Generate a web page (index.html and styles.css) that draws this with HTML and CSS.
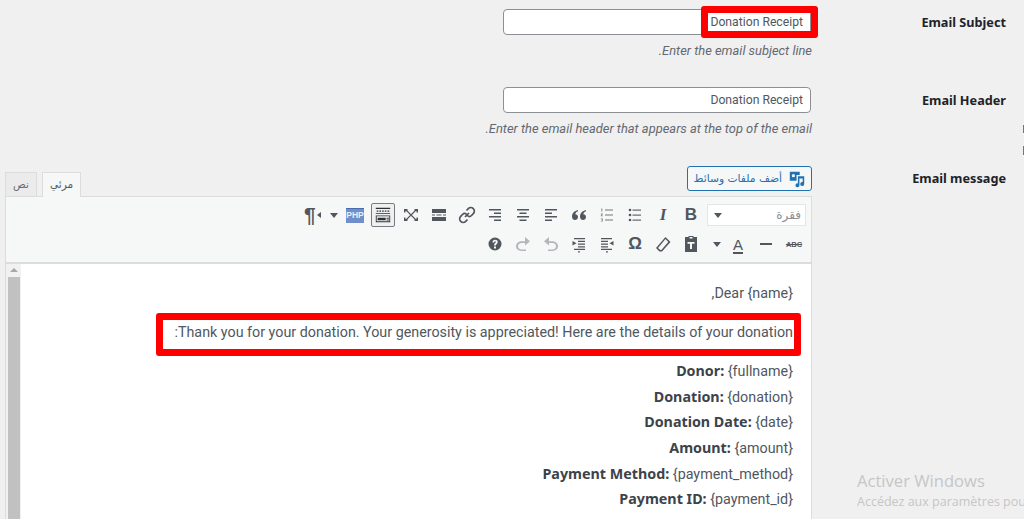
FILE: index.html
```html
<!DOCTYPE html>
<html lang="ar" dir="rtl">
<head>
<meta charset="utf-8">
<title>Email settings</title>
<link rel="stylesheet" href="styles.css">
</head>
<body>
<svg class="defs" width="0" height="0" aria-hidden="true">
  <symbol id="i-fullscreen" viewBox="0 0 20 20"><path d="M3 4h3.500v1.500L6 6H4.500v1.500H3zM13.500 4H17v3.500h-1.500V6H14l-.5-.5zM3 12.500h1.500V14H6l.5.5V16H3zM15.500 12.500H17V16h-3.500v-1.500L14 14h1.500z"/><path fill="none" stroke="currentColor" stroke-width="1.100" d="M5.500 5.500l9 9M14.500 5.500l-9 9"/></symbol>
  <symbol id="i-more" viewBox="0 0 20 20"><path d="M3 4h14v4H3zM3 12h14v4H3zM3 9.400h3v1.200H3zM7.500 9.400h5v1.200h-5zM14 9.400h3v1.200h-3z"/></symbol>
  <symbol id="i-link" viewBox="0 0 20 20"><path fill="none" stroke="currentColor" stroke-width="1.700" d="M8 12l4-4M9.500 5.500l1.800-1.800a3 3 0 0 1 5 5L14.500 10.500a3 3 0 0 1-4.200 0M10.500 14.500l-1.800 1.800a3 3 0 0 1-5-5L5.500 9.500a3 3 0 0 1 4.200 0"/></symbol>
  <symbol id="i-right" viewBox="0 0 20 20"><path d="M4 4h12v1.500H4zM9 7.500h7V9H9zM4 11h12v1.500H4zM9 14.500h7V16H9z"/></symbol>
  <symbol id="i-center" viewBox="0 0 20 20"><path d="M4 4h12v1.500H4zM6.500 7.500h7V9h-7zM4 11h12v1.500H4zM6.500 14.500h7V16h-7z"/></symbol>
  <symbol id="i-left" viewBox="0 0 20 20"><path d="M4 4h12v1.500H4zM4 7.500h7V9H4zM4 11h12v1.500H4zM4 14.500h7V16H4z"/></symbol>
  <symbol id="i-quote" viewBox="0 0 20 20"><path d="M9 5C5.500 6 3 8 3 11.500 3 14 4.500 15 6 15s3-1.200 3-3-1.300-2.800-2.700-2.800C6.500 7.800 7.600 6.800 9 6.300zM17 5c-3.500 1-6 3-6 6.500 0 2.500 1.500 3.500 3 3.500s3-1.200 3-3-1.300-2.800-2.700-2.800c.2-1.400 1.300-2.400 2.700-2.900z"/></symbol>
  <symbol id="i-ol" viewBox="0 0 20 20"><path d="M8 4.500h8v1.100H8zM8 9.500h8v1.100H8zM8 14.500h8v1.100H8z" opacity=".8"/><path d="M4.300 3.500h1v3h-1zM3.800 8.500h2v.8L4.800 10.500h1v.7H3.800v-.8l1-1.200h-1zM3.800 13.500h2v3h-2v-.6h1.200v-.6h-.9v-.5h.9v-.6H3.800z" opacity=".7"/></symbol>
  <symbol id="i-ul" viewBox="0 0 20 20"><path d="M7.500 4.500H16v1.200H7.500zM7.500 9.500H16v1.200H7.500zM7.500 14.500H16v1.200H7.500z" opacity=".85"/><circle cx="5" cy="5" r="1.300"/><circle cx="5" cy="10" r="1.300"/><circle cx="5" cy="15" r="1.300"/></symbol>
  <symbol id="i-kitchen" viewBox="0 0 20 20"><path d="M2 2h16v1.300H2zM2 8h16v.9H2zM3 5h1.800v1.500H3zM6 5h1.800v1.500H6zM9 5h1.800v1.500H9zM12 5h1.800v1.500H12zM15 5h2v1.500h-2z"/><path d="M2 10.500h16v1H2zM2 17h16v1H2zM2 10.500h1v7.500H2zM17 10.500h1v7.500h-1zM4 13h9v2.800H4zM14 13h2.500v1.200H14zM14 15h2.500v1H14z"/></symbol>
  <symbol id="i-help" viewBox="0 0 20 20"><path fill-rule="evenodd" d="M10 3.500a6.500 6.500 0 1 1 0 13 6.500 6.500 0 0 1 0-13zM9 12.500v2h2v-2zM7.500 8.500h1.800c0-.8.300-1.200.8-1.200s.8.300.8.800c0 .9-1.900 1.200-1.900 3.400h1.800c0-1.500 2-1.900 2-3.600C12.800 6.700 11.700 5.800 10 5.800 8.400 5.800 7.500 6.800 7.500 8.500z"/></symbol>
  <symbol id="i-redo" viewBox="0 0 20 20"><path d="M12 3l5 4.200-5 4.300V9H8.500C6.500 9 5 10.500 5 12.300S6.500 15.500 8.500 15.500H13V17H8.500C5.500 17 3 15 3 12.300S5.500 7.300 8.500 7.300H12z"/></symbol>
  <symbol id="i-undo" viewBox="0 0 20 20"><path d="M8 3L3 7.200l5 4.300V9h3.500c2 0 3.500 1.500 3.500 3.300s-1.500 3.200-3.500 3.200H7V17h4.500c3 0 5.500-2 5.500-4.700s-2.500-5-5.500-5H8z"/></symbol>
  <symbol id="i-indent" viewBox="0 0 20 20"><path d="M5 4h11v1.300H5zM9 6.800h7V8H9zM9 9.500h7v1.200H9zM9 12.200h7v1.200H9zM5 14.800h11v1.300H5zM7.500 9.300L3.500 7v4.600z"/><circle cx="10" cy="17.800" r=".9"/></symbol>
  <symbol id="i-outdent" viewBox="0 0 20 20"><path d="M4 4h11v1.300H4zM4 6.800h7V8H4zM4 9.500h7v1.200H4zM4 12.200h7v1.200H4zM4 14.800h11v1.300H4zM12.500 9.300l4-2.300v4.600z"/><circle cx="10" cy="17.800" r=".9"/></symbol>
  <symbol id="i-eraser" viewBox="0 0 20 20"><path fill-rule="evenodd" d="M12.500 3l5 5-8.500 9.500H6.500L3 14zM12.500 5L5 14l2.300 2h1L15.300 8z"/></symbol>
  <symbol id="i-paste" viewBox="0 0 20 20"><path fill-rule="evenodd" d="M7.500 3V2h5v1h3.500v15H4V3zM8.500 3v1.500h3V3zM6.500 8v1.800h2.500V15h2V9.800h2.500V8z"/></symbol>
  <symbol id="i-media" viewBox="0 0 20 20"><path fill-rule="evenodd" d="M2 2h11v3.500H9.500V12H2zM6 4.500a1.800 1.800 0 1 0 0 3.600 1.800 1.800 0 0 0 0-3.600z"/><path d="M11 7h7v8.500a2.200 2.200 0 1 1-1.700-2.100V9.500h-3.600v7.500a2.200 2.200 0 1 1-1.700-2.100z"/></symbol>
</svg>

<main class="form">
  <section class="row">
    <div class="label">Email Subject</div>
    <div class="field">
      <div class="input-wrap">
        <div class="input">Donation Receipt</div>
        <div class="mark mark-subject"></div>
      </div>
      <p class="hint">Enter the email subject line.</p>
    </div>
  </section>

  <section class="row">
    <div class="label">Email Header</div>
    <div class="field">
      <div class="input-wrap">
        <div class="input">Donation Receipt</div>
      </div>
      <p class="hint">Enter the email header that appears at the top of the email.</p>
    </div>
  </section>

  <section class="row row-editor">
    <div class="label label-editor">Email message</div>
    <div class="field">
      <div class="editor-head">
        <button class="media-btn"><svg class="media-icon"><use href="#i-media"/></svg>أضف ملفات وسائط</button>
        <div class="tabs">
          <span class="tab tab-active">مرئي</span>
          <span class="tab">نص</span>
        </div>
      </div>
      <div class="editor">
        <div class="toolbar">
          <div class="tb-row">
            <div class="format">فقرة<span class="caret"></span></div>
            <span class="tb tb-txt tb-b">B</span>
            <span class="tb tb-txt tb-i">I</span>
            <span class="tb"><svg><use href="#i-ul"/></svg></span>
            <span class="tb"><svg><use href="#i-ol"/></svg></span>
            <span class="tb"><svg><use href="#i-quote"/></svg></span>
            <span class="tb"><svg><use href="#i-left"/></svg></span>
            <span class="tb"><svg><use href="#i-center"/></svg></span>
            <span class="tb"><svg><use href="#i-right"/></svg></span>
            <span class="tb"><svg><use href="#i-link"/></svg></span>
            <span class="tb"><svg><use href="#i-more"/></svg></span>
            <span class="tb"><svg><use href="#i-fullscreen"/></svg></span>
            <span class="tb tb-active"><svg><use href="#i-kitchen"/></svg></span>
            <span class="tb"><span class="php">PHP</span></span>
            <span class="tb-arrow"><span class="caret"></span></span>
            <span class="tb tb-txt tb-para"><span class="para-arrow"></span>¶</span>
          </div>
          <div class="tb-row tb-row-2">
            <span class="tb tb-txt tb-abc">ABC</span>
            <span class="tb tb-txt tb-hr"></span>
            <span class="tb tb-txt tb-color">A</span>
            <span class="tb-arrow tb-arrow-wide"><span class="caret"></span></span>
            <span class="tb"><svg><use href="#i-paste"/></svg></span>
            <span class="tb"><svg><use href="#i-eraser"/></svg></span>
            <span class="tb tb-txt tb-omega">Ω</span>
            <span class="tb"><svg><use href="#i-outdent"/></svg></span>
            <span class="tb"><svg><use href="#i-indent"/></svg></span>
            <span class="tb tb-dim"><svg><use href="#i-undo"/></svg></span>
            <span class="tb tb-dim"><svg><use href="#i-redo"/></svg></span>
            <span class="tb"><svg><use href="#i-help"/></svg></span>
          </div>
        </div>
        <div class="content">
          <div class="text">
            <p>Dear {name},</p>
            <div class="para-mark">
              <p>Thank you for your donation. Your generosity is appreciated! Here are the details of your donation:</p>
              <div class="mark mark-para"></div>
            </div>
            <ul class="details">
              <li><strong>Donor:</strong> {fullname}</li>
              <li><strong>Donation:</strong> {donation}</li>
              <li><strong>Donation Date:</strong> {date}</li>
              <li><strong>Amount:</strong> {amount}</li>
              <li><strong>Payment Method:</strong> {payment_method}</li>
              <li><strong>Payment ID:</strong> {payment_id}</li>
            </ul>
          </div>
          <div class="scrollbar"><span class="sb-up"></span><span class="sb-thumb"></span></div>
        </div>
      </div>
    </div>
  </section>
</main>

<aside class="watermark" dir="ltr">
  <div class="wm-title">Activer Windows</div>
  <div class="wm-sub">Accédez aux paramètres pour activer Windows.</div>
</aside>
<span class="edge-tick edge-tick-a"></span>
<span class="edge-tick edge-tick-b"></span>
</body>
</html>
```

FILE: styles.css
```css
* { box-sizing: border-box; }
html, body { margin: 0; height: 519px; overflow: hidden; }
body {
  background: #f0f0f1;
  color: #3c434a;
  font-family: Roboto, "DejaVu Sans", sans-serif;
  font-size: 13px;
  position: relative;
}
.defs { position: absolute; }
.form { padding-top: 9px; }
.row { display: flex; align-items: flex-start; margin-bottom: 27px; }
.row-editor { margin-top: 28px; margin-bottom: 0; }
.label {
  width: 212px;
  flex: none;
  padding: 4px 18px 0 0;
  font-family: "Noto Sans", sans-serif;
  font-weight: 700;
  font-size: 12.7px;
  line-height: 18px;
  color: #1d2327;
}
.label-editor { padding-top: 3px; }
.field { width: 807px; flex: none; }
.input-wrap { position: relative; width: 308px; margin-right: 1px; }
.input {
  height: 26px;
  background: #fff;
  border: 1px solid #8c8f94;
  border-radius: 4px;
  padding: 0 7px;
  font-size: 12.2px;
  line-height: 25px;
  color: #50575e;
}
.hint {
  margin: 7px 0 0;
  font-style: italic;
  font-size: 12.9px;
  line-height: 18px;
  color: #646970;
}
.mark { position: absolute; border: 7px solid #f00; border-radius: 3px; }
.mark-subject { top: -3px; right: -7px; width: 117px; height: 32px; }

.editor-head { display: flex; justify-content: space-between; align-items: flex-end; }
.media-btn {
  display: flex;
  align-items: center;
  gap: 6px;
  width: 125px;
  height: 25px;
  margin-bottom: 5px;
  padding: 0 5px;
  background: #f6f7f7;
  border: 1px solid #2271b1;
  border-radius: 3px;
  color: #2271b1;
  font-family: "DejaVu Sans", sans-serif;
  font-size: 10.7px;
  white-space: nowrap;
}
.media-icon { width: 18px; height: 18px; fill: #2271b1; flex: none; }
.tabs { display: flex; gap: 5px; align-items: flex-end; }
.tab {
  display: block;
  width: 32px;
  height: 24px;
  border: 1px solid #dcdcde;
  border-bottom: 0;
  background: #ebebeb;
  text-align: center;
  font-family: "DejaVu Sans", sans-serif;
  font-size: 10.5px;
  line-height: 23px;
  color: #646970;
}
.tab-active {
  width: 39px;
  height: 25px;
  background: #f6f7f7;
  color: #50575e;
  margin-bottom: -1px;
}
.editor { border: 1px solid #dcdcde; border-bottom: 0; background: #fff; }
.toolbar {
  height: 67px;
  background: #f6f7f7;
  border-bottom: 2px solid #dcdcde;
  padding: 3px 5px 0 0;
}
.tb-row { display: flex; align-items: center; height: 30px; }
.tb-row-2 { margin: -1px -2px 0 0; }
.tb {
  width: 28px;
  height: 24px;
  flex: none;
  display: flex;
  align-items: center;
  justify-content: center;
  color: #50575e;
}
.tb svg { width: 20px; height: 20px; fill: currentColor; display: block; }
.tb-dim { color: #b4b7ba; }
.tb-active {
  width: 24px;
  margin: 0 2px;
  background: #f0f0f1;
  border: 1px solid #787c82;
  border-radius: 2px;
  color: #2c3338;
}
.tb-active svg { width: 20px; height: 18px; }
.format {
  width: 99px;
  height: 22px;
  margin-left: 2px;
  display: flex;
  align-items: center;
  justify-content: space-between;
  padding: 0 4px 0 6px;
  background: #fff;
  border: 1px solid #e4e5e6;
  font-family: "DejaVu Sans", sans-serif;
  font-size: 12px;
  color: #8c8f94;
}
.caret {
  display: block;
  width: 0;
  height: 0;
  border-left: 4px solid transparent;
  border-right: 4px solid transparent;
  border-top: 5px solid #50575e;
}
.tb-arrow { width: 14px; flex: none; display: flex; justify-content: center; }
.tb-arrow-wide { width: 19px; padding-right: 0; padding-left: 4px; }
.tb-txt { font-family: "Liberation Sans", sans-serif; direction: ltr; }
.tb-b { font-size: 17px; font-weight: 700; }
.tb-i { font-size: 17px; font-weight: 700; font-style: italic; font-family: "Liberation Serif", serif; }
.tb-para { font-size: 21px; font-weight: 700; gap: 1px; flex-direction: row-reverse; justify-content: flex-end; padding-left: 5px; }
.para-arrow {
  display: block;
  width: 0;
  height: 0;
  border-top: 3px solid transparent;
  border-bottom: 3px solid transparent;
  border-right: 4px solid #50575e;
}
.php {
  display: block;
  width: 18px;
  height: 15px;
  background: #6f8fc9;
  border-top: 1px solid #4a6cb0;
  color: #e8eef8;
  font-family: "Liberation Sans", sans-serif;
  font-size: 8.5px;
  font-weight: 700;
  line-height: 13px;
  text-align: center;
}
.tb-abc { font-size: 7.5px; font-weight: 700; text-decoration: line-through; }
.tb-hr::before { content: ""; display: block; width: 12px; height: 2px; background: #50575e; }
.tb-color { font-size: 15px; position: relative; text-decoration: underline; text-decoration-thickness: 2px; text-underline-offset: 2px; }
.tb-omega { font-size: 17px; font-weight: 700; }

.content { display: flex; height: 256px; overflow: hidden; }
.text {
  flex: 1;
  padding: 17px 18px 0 0;
  font-size: 14.3px;
  line-height: 25.6px;
  color: #50575e;
}
.text p { margin: 0 0 13.5px; }
.para-mark { position: relative; }
.mark-para { top: -7px; left: 135px; right: -8px; height: 43px; }
.details { list-style: none; margin: 1.6px 0 0; padding: 0; }
.details strong { font-family: "Noto Sans", sans-serif; font-size: 14.3px; color: #3c434a; line-height: 1; }
.scrollbar {
  width: 15px;
  flex: none;
  display: flex;
  flex-direction: column;
  align-items: center;
  background: #f1f1f1;
}
.sb-up {
  display: block;
  margin: 4px 0 5px;
  width: 0;
  height: 0;
  border-left: 4px solid transparent;
  border-right: 4px solid transparent;
  border-bottom: 4px solid #a8a8a8;
}
.sb-thumb { display: block; flex: 1; width: 12px; background: #c1c1c1; }

.watermark {
  position: absolute;
  left: 857px;
  top: 470px;
  width: 320px;
  font-family: "Open Sans", sans-serif;
  color: #c6c6c6;
}
.wm-title { font-size: 16.6px; line-height: 22px; }
.wm-sub { font-size: 12.5px; line-height: 18px; margin-top: 1px; }
.edge-tick { position: absolute; right: 0; width: 1px; background: #4a80b0; }
.edge-tick-a { top: 125px; height: 8px; }
.edge-tick-b { top: 146px; height: 9px; }
```
